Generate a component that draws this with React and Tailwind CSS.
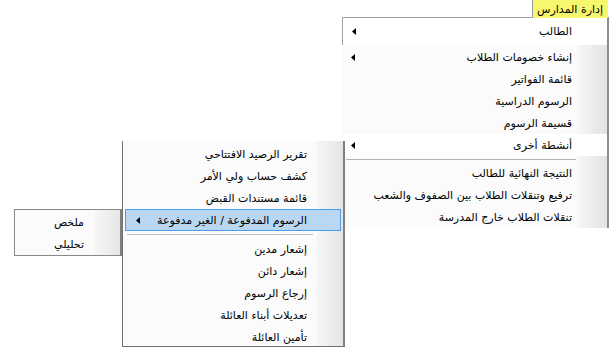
import React from 'react'

const arabic = "font-['DejaVu_Sans',sans-serif] text-[11px] text-black"

function Arrow() {
  return (
    <svg width="4" height="7" viewBox="0 0 4 7" className="shrink-0">
      <path d="M4 0 L0 3.5 L4 7 Z" fill="#000" />
    </svg>
  )
}

function Item({ label, arrow, active, selected, pr, pl }) {
  let cls = 'relative flex items-center justify-between h-[22px] '
  if (selected) cls += 'bg-[#b9d7f3] outline outline-1 outline-[#4d9be0] -outline-offset-1 mx-[2px] '
  else if (active) cls += 'bg-white '
  return (
    <div className={cls} style={{ paddingRight: pr, paddingLeft: pl }}>
      <span className="whitespace-nowrap leading-none">{label}</span>
      {arrow && <Arrow />}
    </div>
  )
}

export default function App() {
  const first = [
    { label: 'إنشاء خصومات الطلاب', arrow: true },
    { label: 'قائمة الفواتير' },
    { label: 'الرسوم الدراسية' },
    { label: 'قسيمة الرسوم' },
    { label: 'أنشطة أخرى', arrow: true, active: true },
  ]
  const firstLower = [
    { label: 'النتيجة النهائية للطالب' },
    { label: 'ترفيع وتنقلات الطلاب بين الصفوف والشعب' },
    { label: 'تنقلات الطلاب خارج المدرسة' },
  ]
  const second = [
    { label: 'تقرير الرصيد الافتتاحي' },
    { label: 'كشف حساب ولي الأمر' },
    { label: 'قائمة مستندات القبض' },
  ]
  const secondLower = [
    { label: 'إشعار مدين' },
    { label: 'إشعار دائن' },
    { label: 'إرجاع الرسوم' },
    { label: 'تعديلات أبناء العائلة' },
    { label: 'تأمين العائلة' },
  ]

  return (
    <div className={`relative w-[611px] h-[360px] bg-white overflow-hidden ${arabic}`}>
      {/* menu bar item */}
      <div
        dir="rtl"
        className="absolute left-[532px] top-0 z-20 w-[76px] h-[18px] bg-[#f7f76d] border-l border-[#9c9c9c] flex items-center pr-[5px]"
      >
        <span className="whitespace-nowrap leading-none">إدارة المدارس</span>
      </div>

      {/* first dropdown */}
      <div
        dir="rtl"
        className="absolute left-[342px] top-[17px] z-10 w-[267px] h-[211px] border-t border-[#a0a0a0] border-r-2 border-r-[#8c8c8c] bg-[#fbfbfb]"
      >
        <div className="absolute right-0 top-0 bottom-0 w-[30px] bg-gradient-to-r from-[#f7f7f7] to-[#e2e2e2]" />
        <div className="relative flex flex-col">
          <div className="h-[27px] bg-white border-l border-[#a0a0a0] flex items-center justify-between pr-[35px] pl-[9px] mb-[1px]">
            <span className="whitespace-nowrap leading-none">الطالب</span>
            <Arrow />
          </div>
          {first.map((it) => (
            <Item key={it.label} {...it} pr={35} pl={9} />
          ))}
          <div className="h-[6px] flex items-center pl-[4px] pr-[31px]">
            <div className="h-px w-full bg-[#b5b5b5]" />
          </div>
          {firstLower.map((it) => (
            <Item key={it.label} {...it} pr={35} pl={9} />
          ))}
        </div>
      </div>

      {/* second submenu */}
      <div
        dir="rtl"
        className="absolute left-[122px] top-[141px] z-10 w-[223px] h-[206px] border-l border-b border-[#707070] border-r-2 border-r-[#7f7f7f] bg-[#fbfbfb] pt-[2px]"
      >
        <div className="absolute right-0 top-0 bottom-0 w-[26px] bg-gradient-to-r from-[#f6f6f6] to-[#e4e4e4]" />
        <div className="relative flex flex-col">
          {second.map((it) => (
            <Item key={it.label} {...it} pr={36} pl={12} />
          ))}
          <Item label="الرسوم المدفوعة / الغير مدفوعة" arrow selected pr={34} pl={11} />
          <div className="h-[7px] flex items-center pl-[4px] pr-[30px]">
            <div className="h-px w-full bg-[#c0c0c0]" />
          </div>
          {secondLower.map((it) => (
            <Item key={it.label} {...it} pr={36} pl={12} />
          ))}
        </div>
      </div>

      {/* third submenu */}
      <div
        dir="rtl"
        className="absolute left-[14px] top-[209px] z-10 w-[108px] h-[47px] border border-[#8a8a8a] border-r-2 border-r-[#7f7f7f] bg-[#fbfbfb] pt-[1px]"
      >
        <div className="absolute right-0 top-0 bottom-0 w-[25px] bg-gradient-to-r from-[#f6f6f6] to-[#e6e6e6]" />
        <div className="relative flex flex-col">
          <Item label="ملخص" pr={36} pl={8} />
          <Item label="تحليلي" pr={36} pl={8} />
        </div>
      </div>
    </div>
  )
}
